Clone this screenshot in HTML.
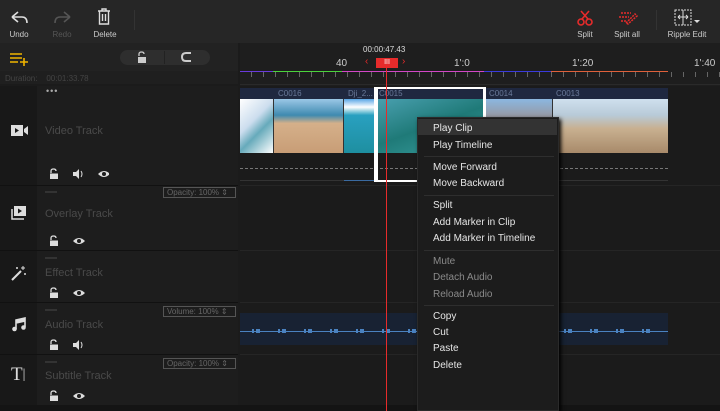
<!DOCTYPE html><html><head><style>
*{margin:0;padding:0;box-sizing:border-box}
body{width:720px;height:411px;background:#1b1b1b;font-family:"Liberation Sans",sans-serif;position:relative;overflow:hidden;color:#ddd}
.a{position:absolute}
.tb{font-size:8px;color:#ccc;text-align:center}
.trk{color:#4a4a4a;font-size:11px}
.mi{position:absolute;left:433px;font-size:10px;color:#e6e6e6}
.dis{color:#8a8a8a}
.sep{position:absolute;left:424px;width:130px;height:1px;background:#2e2e2e}
.op{position:absolute;border:1px solid #555;color:#666;font-size:8px;padding:0 3px;height:11px;line-height:9px;width:73px;left:163px}
</style></head><body>
<div class="a" style="left:0;top:0;width:720px;height:43px;background:#262626"></div>
<svg class="a" style="left:8px;top:9px" width="22" height="18"><path d="M4 8 L10 3 M4 8 L10 13 M4 8 H14 Q19 8 19 14" stroke="#ddd" stroke-width="1.6" fill="none"/></svg>
<div class="a tb" style="left:2px;top:30px;width:34px">Undo</div>
<svg class="a" style="left:52px;top:9px" width="22" height="18"><path d="M18 8 L12 3 M18 8 L12 13 M18 8 H8 Q3 8 3 14" stroke="#555" stroke-width="1.6" fill="none"/></svg>
<div class="a tb" style="left:45px;top:30px;width:34px;color:#555">Redo</div>
<svg class="a" style="left:97px;top:8px" width="14" height="17"><path d="M1 3H13M5 3V1H9V3M2.5 3V16H11.5V3M5.5 6V13M8.5 6V13" stroke="#ddd" stroke-width="1.4" fill="none"/></svg>
<div class="a tb" style="left:88px;top:30px;width:34px">Delete</div>
<div class="a" style="left:134px;top:10px;width:1px;height:20px;background:#333"></div>
<svg class="a" style="left:577px;top:10px" width="16" height="16"><circle cx="4" cy="12" r="3" stroke="#e62b2b" stroke-width="1.6" fill="none"/><circle cx="12" cy="12" r="3" stroke="#e62b2b" stroke-width="1.6" fill="none"/><path d="M5 9 L12 1M11 9 L4 1" stroke="#e62b2b" stroke-width="1.6"/></svg>
<div class="a tb" style="left:570px;top:30px;width:30px">Split</div>
<svg class="a" style="left:618px;top:11px" width="20" height="14"><path d="M3 2H13M1 6H11M3 10H9M8 12 L17 3 L19 5 L10 13 Z" stroke="#e62b2b" stroke-width="1.5" fill="none" stroke-dasharray="2 1"/></svg>
<div class="a tb" style="left:610px;top:30px;width:34px">Split all</div>
<div class="a" style="left:656px;top:10px;width:1px;height:20px;background:#333"></div>
<svg class="a" style="left:674px;top:9px" width="26" height="18"><rect x="1" y="1" width="16" height="15" stroke="#ddd" fill="none" stroke-dasharray="2 1"/><path d="M9 1V16M4 8H14M4 8L6 6M4 8L6 10M14 8L12 6M14 8L12 10" stroke="#ddd" fill="none"/><path d="M20 11H26L23 14Z" fill="#ddd"/></svg>
<div class="a tb" style="left:664px;top:30px;width:46px">Ripple Edit</div>
<div class="a" style="left:0;top:43px;width:238px;height:28px;background:#222"></div>
<div class="a" style="left:0;top:71px;width:238px;height:13px;background:#1f1f1f"></div>
<svg class="a" style="left:10px;top:52px" width="18" height="14"><path d="M0 2H12M0 6H12M0 10H8M10 10H18M14 6V14" stroke="#f0b400" stroke-width="1.6"/></svg>
<div class="a" style="left:120px;top:50px;width:90px;height:15px;border-radius:8px;background:#2e2e2e"></div>
<div class="a" style="left:164px;top:51px;width:1px;height:13px;background:#222"></div>
<svg class="a" style="left:137px;top:51px" width="10" height="12"><path d="M2 5V3Q2 1 4.5 1Q7 1 7 3" stroke="#ccc" stroke-width="1.3" fill="none"/><rect x="1" y="6" width="8" height="6" fill="#ccc"/></svg>
<svg class="a" style="left:181px;top:52px" width="11" height="10"><path d="M10 1H5Q1 1 1 5Q1 9 5 9H10" stroke="#ccc" stroke-width="2" fill="none"/></svg>
<div class="a" style="left:5px;top:74px;font-size:8px;color:#444">Duration:&nbsp;&nbsp;&nbsp; 00:01:33.78</div>
<div class="a" style="left:240px;top:43px;width:480px;height:43px;background:#1e1e1e"></div>
<div class="a" style="left:363px;top:45px;font-size:8px;color:#ddd">00:00:47.43</div>
<div class="a" style="left:376px;top:58px;width:22px;height:10px;background:#e62b2b;color:#fff;font-size:7px;text-align:center;line-height:10px">III</div>
<div class="a" style="left:365px;top:56px;color:#e62b2b;font-size:10px">‹</div>
<div class="a" style="left:402px;top:56px;color:#e62b2b;font-size:10px">›</div>
<div class="a" style="left:336px;top:58px;font-size:10px;color:#ccc">40</div>
<div class="a" style="left:454px;top:58px;font-size:10px;color:#ccc">1':0</div>
<div class="a" style="left:572px;top:58px;font-size:10px;color:#ccc">1':20</div>
<div class="a" style="left:694px;top:58px;font-size:10px;color:#ccc">1':40</div>
<div class="a" style="left:240px;top:71px;width:33px;height:1px;background:#6a3adc"></div>
<div class="a" style="left:273px;top:71px;width:69px;height:1px;background:#4bd43b"></div>
<div class="a" style="left:342px;top:71px;width:142px;height:1px;background:#d446c8"></div>
<div class="a" style="left:484px;top:71px;width:67px;height:1px;background:#3a3adc"></div>
<div class="a" style="left:551px;top:71px;width:117px;height:1px;background:#e0603a"></div>
<div class="a" style="left:240px;top:72px;width:480px;height:5px;background:repeating-linear-gradient(90deg,transparent 0 11px,#666 11px 12px)"></div>
<div class="a" style="left:240px;top:84px;width:480px;height:1px;background:#2a2a2a"></div>
<div class="a" style="left:0;top:86px;width:37px;height:320px;background:#181818"></div>
<div class="a" style="left:37px;top:86px;width:201px;height:320px;background:#1d1d1d"></div>
<div class="a" style="left:0;top:185px;width:238px;height:1px;background:#111"></div>
<div class="a" style="left:0;top:250px;width:238px;height:1px;background:#111"></div>
<div class="a" style="left:0;top:302px;width:238px;height:1px;background:#111"></div>
<div class="a" style="left:0;top:354px;width:238px;height:1px;background:#111"></div>
<div class="a" style="left:0;top:405px;width:720px;height:6px;background:#141414"></div>
<div class="a" style="left:46px;top:86px;color:#aaa;font-size:9px;letter-spacing:1px">•••</div>
<div class="a trk" style="left:45px;top:125px">Video Track</div>
<div class="a trk" style="left:45px;top:208px">Overlay Track</div>
<div class="a trk" style="left:45px;top:267px">Effect Track</div>
<div class="a trk" style="left:45px;top:319px">Audio Track</div>
<div class="a trk" style="left:45px;top:370px">Subtitle Track</div>
<div class="op" style="top:187px">Opacity: 100% ⇕</div>
<div class="op" style="top:306px">Volume: 100% ⇕</div>
<div class="op" style="top:358px">Opacity: 100% ⇕</div>
<div class="a" style="left:45px;top:191px;width:12px;height:2px;background:#333"></div>
<div class="a" style="left:45px;top:257px;width:12px;height:2px;background:#333"></div>
<div class="a" style="left:45px;top:309px;width:12px;height:2px;background:#333"></div>
<div class="a" style="left:45px;top:361px;width:12px;height:2px;background:#333"></div>
<svg class="a" style="left:11px;top:124px" width="18" height="13"><rect x="0" y="1" width="12" height="11" fill="#ddd"/><path d="M4 4L8 6.5L4 9Z" fill="#181818"/><path d="M13 5L17 2V11L13 8Z" fill="#ddd"/></svg>
<svg class="a" style="left:11px;top:206px" width="16" height="14"><rect x="3" y="0" width="12" height="10" fill="#ddd"/><path d="M7 2.5L11 5L7 7.5Z" fill="#181818"/><path d="M1 3V13H13" stroke="#ddd" stroke-width="1.5" fill="none"/></svg>
<svg class="a" style="left:11px;top:265px" width="16" height="16"><path d="M1 15L10 6" stroke="#ddd" stroke-width="2"/><path d="M12 1V5M10 3H14M14 8V10M13 9H15M6 2V4M5 3H7" stroke="#ddd"/></svg>
<svg class="a" style="left:12px;top:317px" width="14" height="15"><path d="M4 3V12M13 1V10M4 3L13 1V4L4 6Z" stroke="#ddd" stroke-width="1.6" fill="#ddd"/><circle cx="2.5" cy="12" r="2.3" fill="#ddd"/><circle cx="11.5" cy="10.5" r="2.3" fill="#ddd"/></svg>
<div class="a" style="left:11px;top:364px;font-family:'Liberation Serif',serif;font-size:19px;color:#ddd">T<span style="font-size:14px;vertical-align:2px">|</span></div>
<svg width="0" height="0" style="position:absolute"><defs>
<g id="lk"><path d="M2 5V3Q2 1 4.5 1Q7 1 7 3" stroke="#ddd" stroke-width="1.3" fill="none"/><rect x="1" y="5.5" width="8" height="5.5" fill="#ddd"/></g>
<g id="sp"><path d="M0 4H3L6 1V11L3 8H0Z" fill="#ddd"/><path d="M8 3Q10 6 8 9" stroke="#ddd" fill="none"/></g>
<g id="ey"><path d="M0 6Q6 0 12 6Q6 12 0 6Z" fill="#ddd"/><circle cx="6" cy="6" r="2" fill="#1d1d1d"/></g>
</defs></svg>
<svg class="a" style="left:49px;top:168px" width="60" height="13"><use href="#lk"/><use href="#sp" x="24"/><use href="#ey" x="49" y="0"/></svg>
<svg class="a" style="left:49px;top:235px" width="40" height="13"><use href="#lk"/><use href="#ey" x="24"/></svg>
<svg class="a" style="left:49px;top:287px" width="40" height="13"><use href="#lk"/><use href="#ey" x="24"/></svg>
<svg class="a" style="left:49px;top:339px" width="40" height="13"><use href="#lk"/><use href="#sp" x="24"/></svg>
<svg class="a" style="left:49px;top:390px" width="40" height="13"><use href="#lk"/><use href="#ey" x="24"/></svg>
<div class="a" style="left:240px;top:88px;width:428px;height:11px;background:#1f2840"></div>
<div class="a" style="left:240px;top:99px;width:428px;height:54px;background:#333"></div>
<div class="a" style="left:240px;top:99px;width:33px;height:54px;background:linear-gradient(135deg,#fff,#cde 40%,#6ab 60%,#fff)"></div>
<div class="a" style="left:274px;top:99px;width:69px;height:54px;background:linear-gradient(180deg,#9bc7e6 0,#3f8ab0 30%,#d5b08a 45%,#c89d76 100%)"></div>
<div class="a" style="left:344px;top:99px;width:30px;height:54px;background:linear-gradient(180deg,#5aa7e6 0,#fff 15%,#29a0c0 30%,#1e8fa0 100%)"></div>
<div class="a" style="left:375px;top:99px;width:110px;height:54px;background:linear-gradient(160deg,#4aa0b0,#1f7a78 50%,#3aa0a0)"></div>
<div class="a" style="left:486px;top:99px;width:66px;height:54px;background:linear-gradient(180deg,#8bb7e0,#a08070 60%,#caa888)"></div>
<div class="a" style="left:553px;top:99px;width:115px;height:54px;background:linear-gradient(180deg,#cfe0ee 0,#b8cad8 30%,#c8b090 55%,#a88a6a 100%)"></div>
<div class="a" style="left:278px;top:89px;font-size:8px;color:#6a7a9a">C0016</div>
<div class="a" style="left:348px;top:89px;font-size:8px;color:#6a7a9a">Dji_2...</div>
<div class="a" style="left:379px;top:89px;font-size:8px;color:#6a7a9a">C0015</div>
<div class="a" style="left:489px;top:89px;font-size:8px;color:#6a7a9a">C0014</div>
<div class="a" style="left:556px;top:89px;font-size:8px;color:#6a7a9a">C0013</div>
<div class="a" style="left:240px;top:168px;width:428px;height:1px;border-top:1px dashed #777"></div>
<div class="a" style="left:240px;top:180px;width:428px;height:1px;background:#333"></div>
<div class="a" style="left:344px;top:180px;width:30px;height:1px;background:#3a6aa0"></div>
<div class="a" style="left:374px;top:87px;width:112px;height:95px;border:2px solid #fff;border-left-width:4px;border-right-width:3px"></div>
<div class="a" style="left:240px;top:313px;width:428px;height:32px;background:#182233"></div>
<div class="a" style="left:240px;top:331px;width:428px;height:1px;background:#4a82c0"></div>
<div class="a" style="left:240px;top:329px;width:428px;height:4px;background:repeating-linear-gradient(90deg,transparent 0 12px,#4a82c0 12px 14px,transparent 14px 16px,#4a82c0 16px 20px,transparent 20px 26px)"></div>
<div class="a" style="left:240px;top:250px;width:480px;height:1px;background:#252525"></div>
<div class="a" style="left:240px;top:185px;width:480px;height:1px;background:#252525"></div>
<div class="a" style="left:240px;top:302px;width:480px;height:1px;background:#252525"></div>
<div class="a" style="left:240px;top:354px;width:480px;height:1px;background:#252525"></div>
<div class="a" style="left:386px;top:66px;width:1px;height:345px;background:#e62b2b"></div>
<div class="a" style="left:417px;top:117px;width:142px;height:294px;background:#1c1c1c;border:1px solid #2a2a2a;box-shadow:2px 2px 4px #000"></div>
<div class="a" style="left:418px;top:119px;width:139px;height:16px;background:#333"></div>
<div class="mi" style="top:123px">Play Clip</div>
<div class="mi" style="top:140px">Play Timeline</div>
<div class="sep" style="top:156px"></div>
<div class="mi" style="top:162px">Move Forward</div>
<div class="mi" style="top:178px">Move Backward</div>
<div class="sep" style="top:195px"></div>
<div class="mi" style="top:200px">Split</div>
<div class="mi" style="top:217px">Add Marker in Clip</div>
<div class="mi" style="top:233px">Add Marker in Timeline</div>
<div class="sep" style="top:250px"></div>
<div class="mi dis" style="top:256px">Mute</div>
<div class="mi dis" style="top:272px">Detach Audio</div>
<div class="mi dis" style="top:289px">Reload Audio</div>
<div class="sep" style="top:305px"></div>
<div class="mi" style="top:311px">Copy</div>
<div class="mi" style="top:327px">Cut</div>
<div class="mi" style="top:343px">Paste</div>
<div class="mi" style="top:360px">Delete</div>
</body></html>
